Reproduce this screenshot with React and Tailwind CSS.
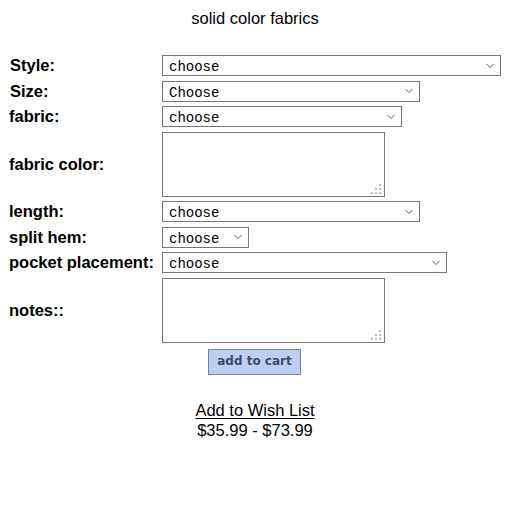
import React from 'react';

function Chevron() {
    return (
        <svg className="pointer-events-none absolute right-[5px] top-1/2 -translate-y-1/2" width="10" height="6" viewBox="0 0 10 6">
            <path d="M1.5 1 L5 4.5 L8.5 1" fill="none" stroke="#5a5a5a" strokeWidth="1" />
        </svg>
    );
}

function Choose({ width, label = 'choose' }) {
    return (
        <div className={`relative h-[21px] border border-[#767676] bg-white ${width}`}>
            <select className="h-full w-full appearance-none pl-[6px] pr-5 font-mono text-[14px] font-normal text-black outline-none">
                <option>{label}</option>
            </select>
            <Chevron />
        </div>
    );
}

// resize corner drawn as a little staircase of grey squares
function Grip() {
    return (
        <svg className="pointer-events-none absolute bottom-[3px] right-[4px]" width="10" height="10" viewBox="0 0 10 10" fill="#bdbdbd">
            <rect x="8" y="0" width="2" height="2" />
            <rect x="4" y="4" width="2" height="2" />
            <rect x="8" y="4" width="2" height="2" />
            <rect x="0" y="8" width="2" height="2" />
            <rect x="4" y="8" width="2" height="2" />
            <rect x="8" y="8" width="2" height="2" />
        </svg>
    );
}

function Notes() {
    return (
        <div className="relative h-[65px] w-[223px]">
            <textarea className="block h-full w-full resize-none border border-[#767676] bg-white outline-none" />
            <Grip />
        </div>
    );
}

function App() {
    return (
        <div className="w-[510px] bg-white font-['Liberation_Sans',Arial,sans-serif] text-[16.5px] leading-[19px] text-black">
            <p className="pt-[9px] text-center">solid color fabrics</p>

            <div className="mt-[27px] grid grid-cols-[153px_auto] items-center justify-start gap-y-[4.5px] pl-[9px] font-bold">
                <span className="pl-px">Style:</span>
                <Choose width="w-[339px]" />

                <span className="pl-px">Size:</span>
                <Choose width="w-[258px]" label="Choose" />

                <span>fabric:</span>
                <Choose width="w-[240px]" />

                <span>fabric color:</span>
                <Notes />

                <span>length:</span>
                <Choose width="w-[258px]" />

                <span>split hem:</span>
                <Choose width="w-[87px]" />

                <span>pocket placement:</span>
                <Choose width="w-[285px]" />

                <span>notes::</span>
                <Notes />
            </div>

            <div className="mt-[6px] pl-[208px]">
                <button className="h-[26px] w-[93px] border border-[#6e84ad] bg-[#bccff0] font-['DejaVu_Sans',Verdana,sans-serif] text-[12px] font-bold text-[#3c4a68]">
                    add to cart
                </button>
            </div>

            <div className="mt-[26px] text-center">
                <a href="#" className="underline underline-offset-2">Add to Wish List</a>
                <p className="mt-[1px]">$35.99 - $73.99</p>
            </div>
        </div>
    );
}

export default App;
